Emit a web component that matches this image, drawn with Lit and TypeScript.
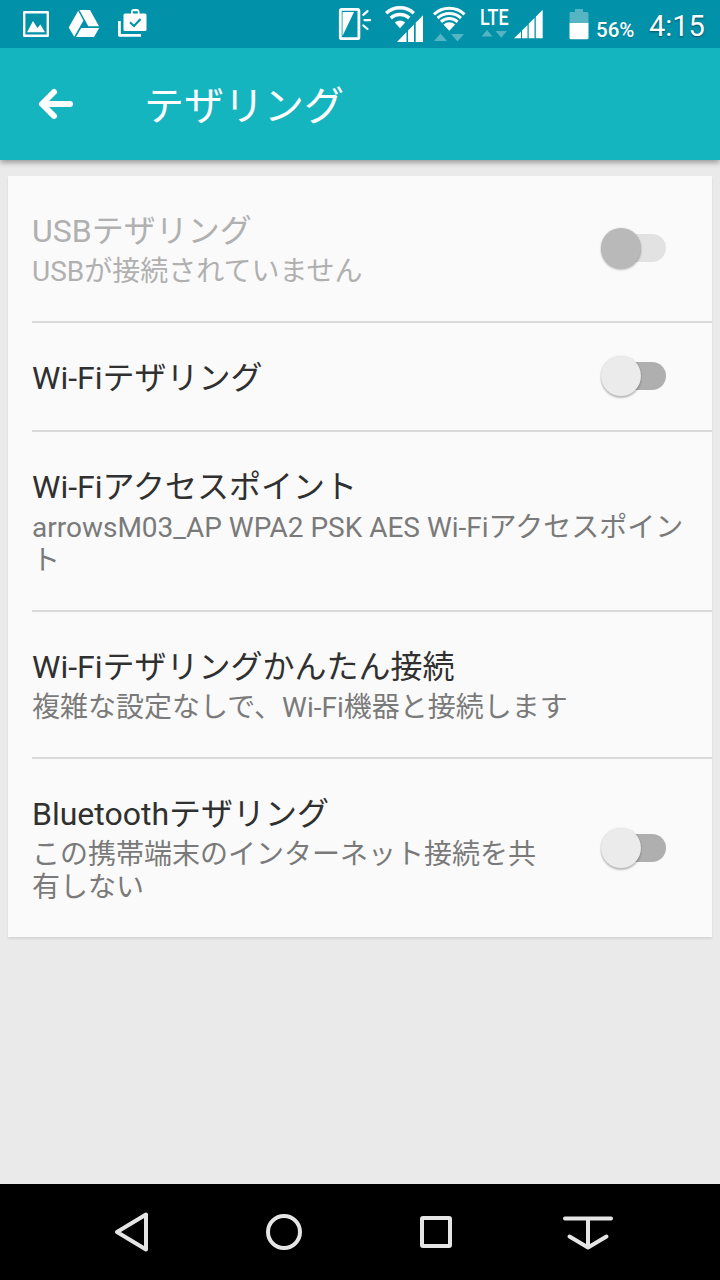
import { LitElement, html, css } from "lit";
import { customElement, property } from "lit/decorators.js";

@customElement("toggle-switch")
class ToggleSwitch extends LitElement {
  @property({ type: Boolean, reflect: true }) disabled = false;

  static styles = css`
    :host { display: flex; align-items: center; width: 66px; height: 34px; }
    .thumb {
      width: 40px; height: 40px; border-radius: 50%; flex: none; z-index: 1;
      margin-left: 1px; background: #ebebeb;
      box-shadow: 0 2px 2px rgba(0, 0, 0, 0.24), 0 0 2px rgba(0, 0, 0, 0.14);
    }
    .track { flex: 1; height: 28px; margin-left: -20px; border-radius: 0 14px 14px 0; background: #afafaf; }
    :host([disabled]) .thumb { background: #b9b9b9; }
    :host([disabled]) .track { background: #e2e2e2; }
  `;

  render() {
    return html`<div class="thumb"></div><div class="track"></div>`;
  }
}

@customElement("status-bar")
class StatusBar extends LitElement {
  static styles = css`
    :host { display: flex; height: 48px; background: #0191a8; color: #fff; z-index: 1; }
    svg { display: block; flex: none; }
    .battery { font-size: 20.5px; font-weight: 500; line-height: 24px; padding-top: 18px; margin-left: 5px; width: 44px; text-shadow: 0 1px 1px rgba(0,0,0,.15); }
    .clock { font-size: 29px; line-height: 34px; padding-top: 9px; margin-left: 9px; text-shadow: 0 1px 2px rgba(0,0,0,.45); }
  `;

  render() {
    return html`
      <svg width="591" height="48" viewBox="0 0 591 48" fill="#fff">
        <g>
          <path fill="none" stroke="#fff" stroke-width="2.4" stroke-linejoin="round" d="M24.2 12.2H47.8V35.8H24.2Z" />
          <path d="M27 32.3L33 21l4.4 7 3-3.6 4.600 7.900Z" />
        </g>
        <g>
          <path d="M79.400 10H90l9 16.300H88.300Z" />
          <path d="M78.200 10.800L83.400 20.500 74.300 36.800 68.700 27.500Z" />
          <path d="M81.200 28H99.200L94 37H76Z" />
        </g>
        <g>
          <path fill-rule="evenodd" d="M125 13.500H131V12a3 3 0 0 1 3-3h2.500a3 3 0 0 1 3 3v1.500H145a1.500 1.500 0 0 1 1.500 1.500V29.500a1.500 1.500 0 0 1-1.500 1.500H125a1.500 1.500 0 0 1-1.500-1.500V15a1.500 1.500 0 0 1 1.500-1.500ZM132.800 13.500h5V11.200h-5Z" />
          <path fill="none" stroke="#0191a8" stroke-width="2.100" d="M130 22.300l4 3.700L140.500 19" />
          <path fill="none" stroke="#fff" stroke-width="2.800" stroke-linejoin="round" d="M119.400 21V35.300H141" />
        </g>
        <g>
          <rect x="340.300" y="9.300" width="18.600" height="29.400" rx="1.500" fill="none" stroke="#fff" stroke-width="2.800" />
          <path d="M342.500 12H354L342.500 36Z" />
          <path stroke="#fff" stroke-width="2.200" stroke-linecap="round" d="M363.300 14.800l4.200-3.700M364.500 20.200h5.500M363.300 25.500l4.200 3.500" />
        </g>
        <g fill="none" stroke="#fff" stroke-width="3.500">
          <path d="M386.200 13.200a20.300 20.300 0 0 1 27.600 0" />
          <path d="M390.800 18.100a13.500 13.500 0 0 1 18.400 0" />
          <path stroke="none" fill="#fff" d="M394.800 22.600a7.700 7.700 0 0 1 10.400 0L400 28.200Z" />
        </g>
        <path d="M397 42L406.500 32V42ZM408 30.500L414 24.500V42H408ZM415.700 22.800L423 15.300V42H415.700Z" />
        <g fill="none" stroke="#fff" stroke-width="3">
          <path d="M434 14.300a22.500 22.500 0 0 1 30.600 0" />
          <path d="M437.600 18.100a17.200 17.200 0 0 1 23.400 0" />
          <path d="M441 21.800a12.200 12.200 0 0 1 16.600 0" />
          <path stroke="none" fill="#fff" d="M443.400 24.500a8.700 8.700 0 0 1 11.800 0L449.300 30.800Z" />
        </g>
        <g fill="#55b5c3">
          <path d="M434 41L440.500 33.500 447 41ZM451 34H464L457.500 41.500ZM481.500 36.500L487 30 492.500 36.500ZM495.500 31H507L501.200 37.800Z" />
        </g>
        <text x="480" y="25" font-family="Roboto" font-size="22" font-weight="500" textLength="28.500" lengthAdjust="spacingAndGlyphs">LTE</text>
        <path d="M514 38.200L521 31.500V38.200ZM522 30.500L527.500 25V38.200H522ZM528.700 23.800L534.500 18V38.200H528.700ZM535.800 16.700L542.700 9.800V38.200H535.800Z" />
        <path fill="#55b5c3" d="M570.500 12H575V9h8v3h4a1.500 1.500 0 0 1 1.500 1.500V23H569.500V13a1 1 0 0 1 1-1Z" />
        <path d="M569.500 23h19V37.700a1.500 1.500 0 0 1-1.500 1.500H571a1.500 1.500 0 0 1-1.500-1.500Z" />
      </svg>
      <span class="battery">56%</span>
      <span class="clock">4:15</span>
    `;
  }
}

interface Setting {
  title: string;
  summary?: string;
  toggle?: boolean;
  disabled?: boolean;
}

const SETTINGS: Setting[] = [
  { title: "USBテザリング", summary: "USBが接続されていません", toggle: true, disabled: true },
  { title: "Wi-Fiテザリング", toggle: true },
  { title: "Wi-Fiアクセスポイント", summary: "arrowsM03_AP WPA2 PSK AES Wi-Fiアクセスポイント" },
  { title: "Wi-Fiテザリングかんたん接続", summary: "複雑な設定なしで、Wi-Fi機器と接続します" },
  { title: "Bluetoothテザリング", summary: "この携帯端末のインターネット接続を共有しない", toggle: true },
];

@customElement("app-root")
class AppRoot extends LitElement {
  static styles = css`
    :host {
      display: flex; flex-direction: column; width: 720px; height: 1280px; overflow: hidden;
      background: #eaeaea; font-family: Roboto, "Noto Sans CJK JP", sans-serif;
    }
    .toolbar {
      display: flex; align-items: center; height: 112px; background: #15b5c0; color: #fff;
      box-shadow: 0 2px 6px rgba(0, 0, 0, 0.4); flex: none;
    }
    .toolbar svg { margin-left: 36px; }
    .toolbar h1 { margin: 6px 0 0 68px; font-size: 40px; line-height: 48px; font-weight: 400; }
    main { flex: 1; padding: 16px 8px 0; }
    .card { background: #fafafa; box-shadow: 0 2px 2px rgba(0, 0, 0, 0.09); padding-left: 24px; }
    .row { display: flex; align-items: center; border-bottom: 2px solid #dadada; padding: 36px 24px 33px 0; }
    .row:last-child { border-bottom: 0; }
    .text { flex: 1; }
    .title { font-size: 32px; line-height: 38px; color: #303030; }
    .summary { margin-top: 5px; font-size: 28px; line-height: 33px; color: #7a7a7a; line-break: anywhere; }
    .disabled .title, .disabled .summary { color: #b0b0b0; }
    toggle-switch { margin: 0 22px 4px 56px; }
    nav { height: 96px; background: #000; flex: none; }
    nav svg { display: block; }
  `;

  row(s: Setting) {
    return html`
      <div class="row ${s.disabled ? "disabled" : ""}">
        <div class="text">
          <div class="title">${s.title}</div>
          ${s.summary ? html`<div class="summary">${s.summary}</div>` : ""}
        </div>
        ${s.toggle ? html`<toggle-switch ?disabled=${!!s.disabled}></toggle-switch>` : ""}
      </div>
    `;
  }

  render() {
    return html`
      <status-bar></status-bar>
      <header class="toolbar">
        <svg width="40" height="40" viewBox="36 84 40 40" fill="none" stroke="#fff" stroke-width="6" stroke-linecap="round" stroke-linejoin="round">
          <path d="M54 92L42 104L54 116M43 104H70" />
        </svg>
        <h1>テザリング</h1>
      </header>
      <main><div class="card">${SETTINGS.map((s) => this.row(s))}</div></main>
      <nav>
        <svg width="720" height="96" viewBox="0 1184 720 96" fill="none" stroke="#e5e5e5" stroke-width="4" stroke-linejoin="round" stroke-linecap="round">
          <path d="M146 1214.500V1249.500L117 1232Z" />
          <circle cx="284" cy="1232" r="16" />
          <rect x="422" y="1218" width="28" height="28" rx="1" />
          <path d="M565 1218.500H611M588 1218.500V1247M569.500 1236.500L588 1247.500L606.500 1236.500" />
        </svg>
      </nav>
    `;
  }
}
